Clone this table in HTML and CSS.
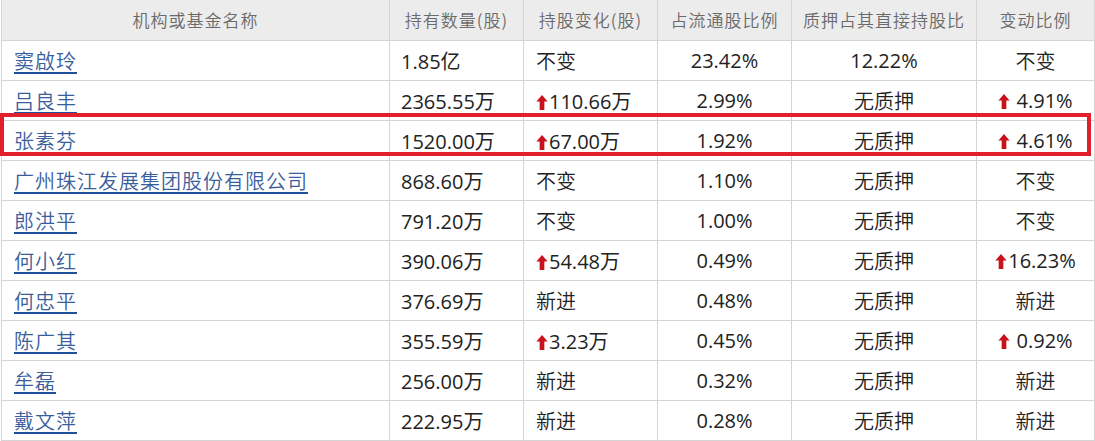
FILE: index.html
```html
<!DOCTYPE html>
<html lang="zh-CN">
<head>
  <meta charset="UTF-8" />
  <title>十大流通股东</title>
  <link rel="stylesheet" href="styles.css">
</head>
<body>
  <div class="wrap">
    <table class="holders">
      <colgroup>
        <col class="c-name"><col class="c-num"><col class="c-chg"><col class="c-pct"><col class="c-pledge"><col class="c-ratio">
      </colgroup>
      <thead>
        <tr>
          <th>机构或基金名称</th>
          <th>持有数量(股)</th>
          <th>持股变化(股)</th>
          <th>占流通股比例</th>
          <th>质押占其直接持股比</th>
          <th>变动比例</th>
        </tr>
      </thead>
      <tbody>
        <tr>
          <td class="name"><a href="#">窦啟玲</a></td>
          <td class="num">1.85亿</td>
          <td class="chg same">不变</td>
          <td class="pct">23.42%</td>
          <td class="pledge num-pl">12.22%</td>
          <td class="ratio same">不变</td>
        </tr>
        <tr>
          <td class="name"><a href="#">吕良丰</a></td>
          <td class="num">2365.55万</td>
          <td class="chg up"><svg class="arrow" viewBox="0 0 12 16"><path d="M6 0 L12 7 L8.5 7 L8.5 16 L3.5 16 L3.5 7 L0 7 Z"/></svg>110.66万</td>
          <td class="pct">2.99%</td>
          <td class="pledge">无质押</td>
          <td class="ratio up"><svg class="arrow" viewBox="0 0 12 16"><path d="M6 0 L12 7 L8.5 7 L8.5 16 L3.5 16 L3.5 7 L0 7 Z"/></svg> 4.91%</td>
        </tr>
        <tr>
          <td class="name"><a href="#">张素芬</a></td>
          <td class="num">1520.00万</td>
          <td class="chg up"><svg class="arrow" viewBox="0 0 12 16"><path d="M6 0 L12 7 L8.5 7 L8.5 16 L3.5 16 L3.5 7 L0 7 Z"/></svg>67.00万</td>
          <td class="pct">1.92%</td>
          <td class="pledge">无质押</td>
          <td class="ratio up"><svg class="arrow" viewBox="0 0 12 16"><path d="M6 0 L12 7 L8.5 7 L8.5 16 L3.5 16 L3.5 7 L0 7 Z"/></svg> 4.61%</td>
        </tr>
        <tr>
          <td class="name"><a href="#">广州珠江发展集团股份有限公司</a></td>
          <td class="num">868.60万</td>
          <td class="chg same">不变</td>
          <td class="pct">1.10%</td>
          <td class="pledge">无质押</td>
          <td class="ratio same">不变</td>
        </tr>
        <tr>
          <td class="name"><a href="#">郎洪平</a></td>
          <td class="num">791.20万</td>
          <td class="chg same">不变</td>
          <td class="pct">1.00%</td>
          <td class="pledge">无质押</td>
          <td class="ratio same">不变</td>
        </tr>
        <tr>
          <td class="name"><a href="#">何小红</a></td>
          <td class="num">390.06万</td>
          <td class="chg up"><svg class="arrow" viewBox="0 0 12 16"><path d="M6 0 L12 7 L8.5 7 L8.5 16 L3.5 16 L3.5 7 L0 7 Z"/></svg>54.48万</td>
          <td class="pct">0.49%</td>
          <td class="pledge">无质押</td>
          <td class="ratio up"><svg class="arrow" viewBox="0 0 12 16"><path d="M6 0 L12 7 L8.5 7 L8.5 16 L3.5 16 L3.5 7 L0 7 Z"/></svg>16.23%</td>
        </tr>
        <tr>
          <td class="name"><a href="#">何忠平</a></td>
          <td class="num">376.69万</td>
          <td class="chg new">新进</td>
          <td class="pct">0.48%</td>
          <td class="pledge">无质押</td>
          <td class="ratio new">新进</td>
        </tr>
        <tr>
          <td class="name"><a href="#">陈广其</a></td>
          <td class="num">355.59万</td>
          <td class="chg up"><svg class="arrow" viewBox="0 0 12 16"><path d="M6 0 L12 7 L8.5 7 L8.5 16 L3.5 16 L3.5 7 L0 7 Z"/></svg>3.23万</td>
          <td class="pct">0.45%</td>
          <td class="pledge">无质押</td>
          <td class="ratio up"><svg class="arrow" viewBox="0 0 12 16"><path d="M6 0 L12 7 L8.5 7 L8.5 16 L3.5 16 L3.5 7 L0 7 Z"/></svg> 0.92%</td>
        </tr>
        <tr>
          <td class="name"><a href="#">牟磊</a></td>
          <td class="num">256.00万</td>
          <td class="chg new">新进</td>
          <td class="pct">0.32%</td>
          <td class="pledge">无质押</td>
          <td class="ratio new">新进</td>
        </tr>
        <tr>
          <td class="name"><a href="#">戴文萍</a></td>
          <td class="num">222.95万</td>
          <td class="chg new">新进</td>
          <td class="pct">0.28%</td>
          <td class="pledge">无质押</td>
          <td class="ratio new">新进</td>
        </tr>
      </tbody>
    </table>
    <!-- 标注框 -->
    <div class="mark"></div>
  </div>
</body>
</html>
```

FILE: styles.css
```css
:root {
  --linha: #d4d4d4;
  --cabeca: #ececec;
  --vermelho: #c8121c;
  --novo: #b8404c;
  --link: #3a5e9c;
  --marca: #e2202c;
  --cjk: "Noto Sans CJK SC DemiLight", "Noto Sans CJK SC Light", "Noto Sans CJK SC", sans-serif;
}

* {
  box-sizing: border-box;
}

body {
  margin: 0;
  background: #ffffff;
  font-family: "Open Sans", "Noto Sans CJK SC", sans-serif;
}

.wrap {
  position: relative;
  width: 1095px;
  height: 441px;
  overflow: hidden;
}

.holders {
  border-collapse: collapse;
  table-layout: fixed;
  width: 1093px;
  margin-left: 1px;
}

.c-name { width: 388px; }
.c-num { width: 134px; }
.c-chg { width: 134px; }
.c-pct { width: 134px; }
.c-pledge { width: 185px; }
.c-ratio { width: 118px; }

.holders th,
.holders td {
  border: 1px solid var(--linha);
  padding: 0;
  white-space: nowrap;
}

.holders thead tr {
  height: 40px;
}

.holders th {
  border-top: none;
  background: var(--cabeca);
  color: #6a6a6a;
  font-family: var(--cjk);
  font-weight: 300;
  font-size: 17px;
  letter-spacing: 1px;
  text-align: center;
}

.holders tbody tr {
  height: 40px;
}

.holders td {
  font-size: 20px;
  color: #222;
}

.name {
  padding-left: 12px !important;
}

.name a {
  font-family: var(--cjk);
  font-weight: 300;
  color: var(--link);
  letter-spacing: 1px;
  text-decoration: underline;
  text-decoration-color: #1f4f9e;
  text-decoration-thickness: 2px;
  text-underline-offset: 3px;
}

.num {
  padding-left: 11px !important;
}

.chg {
  padding-left: 12px !important;
}

.pct,
.pledge,
.ratio {
  text-align: center;
}

.pledge {
  font-family: var(--cjk);
  font-weight: 300;
  color: #4a4a4a;
  font-size: 19px;
}

.pledge.num-pl {
  font-family: "Open Sans", sans-serif;
  font-weight: 400;
  color: #222;
  font-size: 20px;
}

.same {
  font-family: var(--cjk);
  font-weight: 300;
  color: #3a3a3a;
  font-size: 19px;
}

.new {
  font-family: var(--cjk);
  font-weight: 300;
  color: var(--novo);
  font-size: 19px;
}

.up {
  color: var(--vermelho);
}

.arrow {
  width: 12px;
  height: 15px;
  fill: var(--vermelho);
  vertical-align: -1px;
  margin-right: 1px;
}

.mark {
  position: absolute;
  left: 0;
  top: 113px;
  width: 1091px;
  height: 43px;
  border: 4px solid var(--marca);
  pointer-events: none;
}
```
